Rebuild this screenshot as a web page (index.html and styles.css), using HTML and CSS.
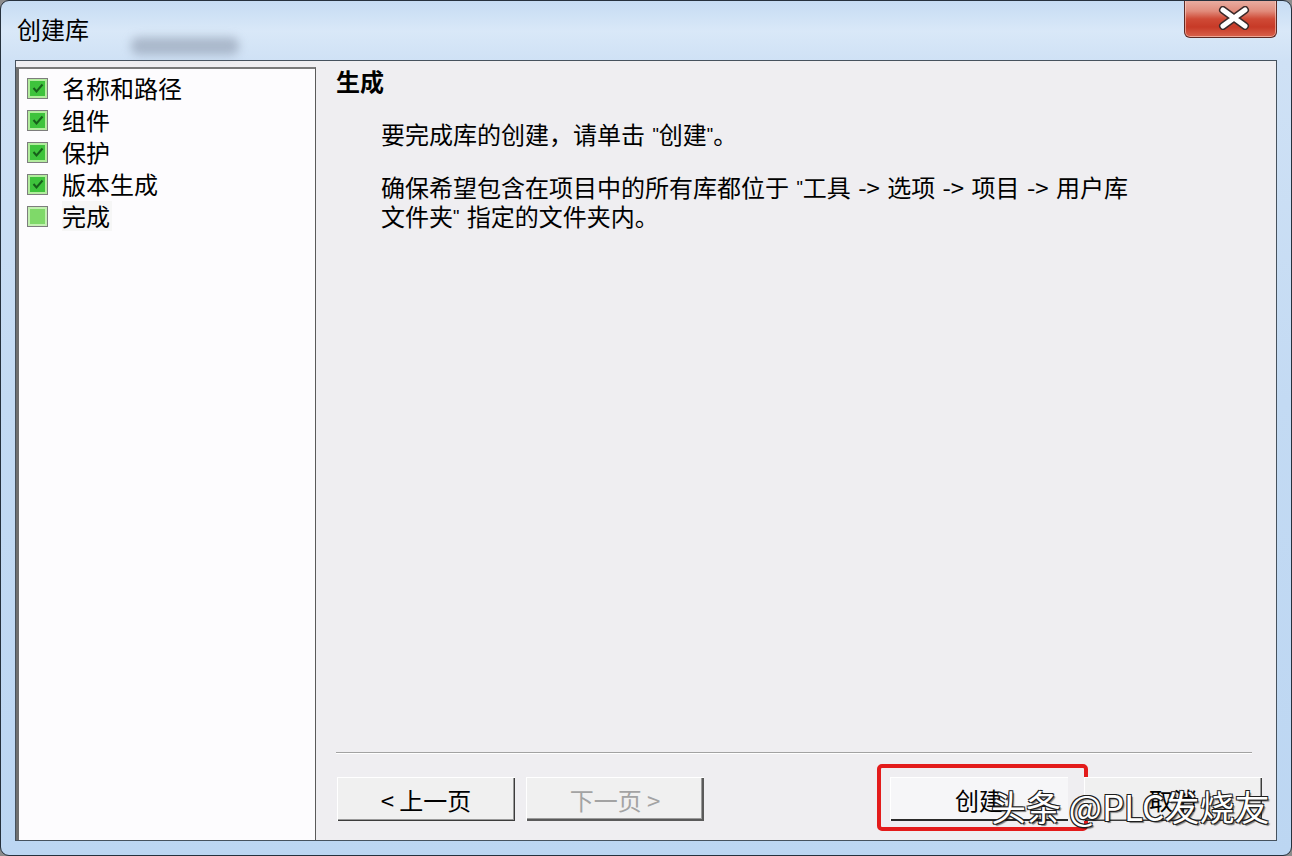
FILE: index.html
```html
<!DOCTYPE html>
<html lang="zh-CN">
<head>
<meta charset="utf-8">
<title>创建库</title>
<link rel="stylesheet" href="styles.css">
</head>
<body>
<div class="window">
  <div class="titlebar">
    <div class="title">创建库</div>
    <div class="smudge"></div>
    <div class="close">
      <svg width="32" height="24" viewBox="0 0 32 24">
        <path d="M5 4 L27 20 M27 4 L5 20" stroke="#3b2a2a" stroke-width="8" stroke-linecap="round" fill="none"/>
        <path d="M5 4 L27 20 M27 4 L5 20" stroke="#ffffff" stroke-width="5" stroke-linecap="round" fill="none"/>
      </svg>
    </div>
  </div>
  <div class="client">
    <div class="tree">
      <div class="item"><span class="cb on"><svg width="14" height="14" viewBox="0 0 14 14"><path d="M2.5 7 L5.5 10.5 L11.5 3.5" stroke="#17601a" stroke-width="2" fill="none"/></svg></span><span class="lbl">名称和路径</span></div>
      <div class="item"><span class="cb on"><svg width="14" height="14" viewBox="0 0 14 14"><path d="M2.5 7 L5.5 10.5 L11.5 3.5" stroke="#17601a" stroke-width="2" fill="none"/></svg></span><span class="lbl">组件</span></div>
      <div class="item"><span class="cb on"><svg width="14" height="14" viewBox="0 0 14 14"><path d="M2.5 7 L5.5 10.5 L11.5 3.5" stroke="#17601a" stroke-width="2" fill="none"/></svg></span><span class="lbl">保护</span></div>
      <div class="item"><span class="cb on"><svg width="14" height="14" viewBox="0 0 14 14"><path d="M2.5 7 L5.5 10.5 L11.5 3.5" stroke="#17601a" stroke-width="2" fill="none"/></svg></span><span class="lbl">版本生成</span></div>
      <div class="item"><span class="cb off"></span><span class="lbl current">完成</span></div>
    </div>
    <div class="main">
      <div class="content">
        <h1 class="heading">生成</h1>
        <p class="para first">要完成库的创建，请单击 <span class="q">"</span>创建<span class="q">"</span>。</p>
        <p class="para">确保希望包含在项目中的所有库都位于 <span class="q">"</span>工具 -&gt; 选项 -&gt; 项目 -&gt; 用户库<br>文件夹<span class="q">"</span> 指定的文件夹内。</p>
      </div>
      <div class="sep"></div>
      <div class="buttons">
        <button class="btn">&lt; 上一页</button>
        <button class="btn disabled">下一页 &gt;</button>
        <button class="btn default">创建<span class="highlight"></span></button>
        <button class="btn cancel">取消</button>
      </div>
    </div>
  </div>
  <div class="watermark">头条 @PLC发烧友</div>
</div>
</body>
</html>
```
FILE: styles.css
```css
* { box-sizing: border-box; }
html, body { margin: 0; padding: 0; }
body {
  width: 1292px;
  height: 856px;
  background: #8c8c8c;
  font-family: "Noto Sans CJK SC", "Noto Sans", sans-serif;
  overflow: hidden;
}
.window {
  position: relative;
  width: 1292px;
  height: 856px;
  border: 1px solid #26313d;
  border-radius: 9px;
  background: linear-gradient(180deg, #c6dcf3 0px, #d9e8f8 30px, #cfe1f5 60px, #c3daf3 400px, #bcd6f2 856px);
  display: flex;
  flex-direction: column;
  overflow: hidden;
}
.titlebar {
  position: relative;
  height: 59px;
  flex: none;
  display: flex;
  align-items: flex-start;
}
.title {
  margin: 12px 0 0 16px;
  font-size: 24px;
  line-height: 32px;
  color: #000;
}
.smudge {
  position: absolute;
  left: 130px;
  top: 36px;
  width: 108px;
  height: 18px;
  background: rgba(120, 130, 150, 0.45);
  filter: blur(5px);
  border-radius: 8px;
}
.close {
  position: absolute;
  left: 1183px;
  top: -2px;
  width: 93px;
  height: 39px;
  border: 1px solid #5e2a24;
  border-top: none;
  border-radius: 0 0 6px 6px;
  background: linear-gradient(180deg, #eab3a8 0px, #e18c7c 12px, #cf4a36 20px, #c73a27 28px, #d9624c 38px);
  box-shadow: inset 0 0 0 1px rgba(255, 220, 210, 0.55);
  display: flex;
  align-items: center;
  justify-content: center;
  padding-left: 6px;
}
.client {
  flex: 1;
  margin: 0 14px 14px 14px;
  border: 1px solid #46525e;
  background: #efeef1;
  display: flex;
}
.tree {
  width: 300px;
  margin-top: 6px;
  background: #fdfcfe;
  border-top: 2px solid #7a7a7a;
  border-left: 3px solid #6f6f6f;
  border-right: 1px solid #5a5a5a;
  padding: 3px 0 0 8px;
}
.item {
  display: flex;
  align-items: center;
  height: 32px;
}
.cb {
  width: 21px;
  height: 21px;
  border: 1px solid #7d7d7d;
  box-shadow: inset 0 0 0 2px #b3ec9f;
  background: #3ec33c;
  display: flex;
  align-items: center;
  justify-content: center;
  flex: none;
}
.cb.off {
  background: #7fd969;
  box-shadow: inset 0 0 0 2px #c3f0b2;
}
.lbl {
  margin-left: 14px;
  font-size: 24px;
  line-height: 30px;
  color: #000;
}
.lbl.current {
  background: #f6f6f6;
  padding-right: 2px;
}
.main {
  flex: 1;
  display: flex;
  flex-direction: column;
  padding: 0 14px 19px 20px;
}
.content { flex: 1; }
.heading {
  margin: 6px 0 0 0;
  font-size: 24px;
  font-weight: bold;
  line-height: 28px;
  color: #000;
}
.para {
  margin: 24px 0 0 45px;
  font-size: 24px;
  line-height: 27px;
  word-spacing: 2px;
  color: #000;
}
.para.first { margin-top: 25px; }
.q {
  font-family: "Liberation Sans", sans-serif;
  font-size: 18px;
  vertical-align: 3px;
}
.sep {
  height: 2px;
  border-top: 1px solid #a2a2a2;
  border-bottom: 1px solid #ffffff;
  margin-right: 10px;
}
.buttons {
  display: flex;
  margin-top: 23px;
  height: 44px;
  padding-left: 1px;
}
.btn {
  position: relative;
  width: 178px;
  height: 44px;
  border: none;
  background: #f0f0f0;
  box-shadow: inset 1px 1px 0 #ffffff, inset -1px -1px 0 #3c3c3c, inset -2px -2px 0 #9a9a9a;
  font-family: "Noto Sans CJK SC", "Noto Sans", sans-serif;
  font-size: 24px;
  color: #000;
  padding: 0;
}
.btn + .btn { margin-left: 11px; }
.btn.disabled {
  color: #a3a3a3;
  box-shadow: inset 1px 1px 0 #ffffff, inset -2px -2px 0 #5a5a5a, inset -3px -3px 0 #9a9a9a;
}
.btn.default {
  margin-left: auto;
  background: #f6f6f8;
  box-shadow: inset 1px 1px 0 #ffffff, inset 0 -2px 0 #2a2a2a;
}
.btn.cancel { margin-left: 16px; }
.highlight {
  position: absolute;
  left: -13px;
  top: -13px;
  width: 211px;
  height: 67px;
  border: 4px solid #e31b1b;
  border-radius: 5px;
}
.watermark {
  position: absolute;
  left: 990px;
  top: 781px;
  font-size: 35px;
  line-height: 48px;
  color: #ffffff;
  text-shadow: 1px 1px 0 #1e1e1e, -1px -1px 0 #1e1e1e, 1px -1px 0 #1e1e1e, -1px 1px 0 #1e1e1e, 2px 2px 1px rgba(0,0,0,0.5);
  white-space: nowrap;
}
```
